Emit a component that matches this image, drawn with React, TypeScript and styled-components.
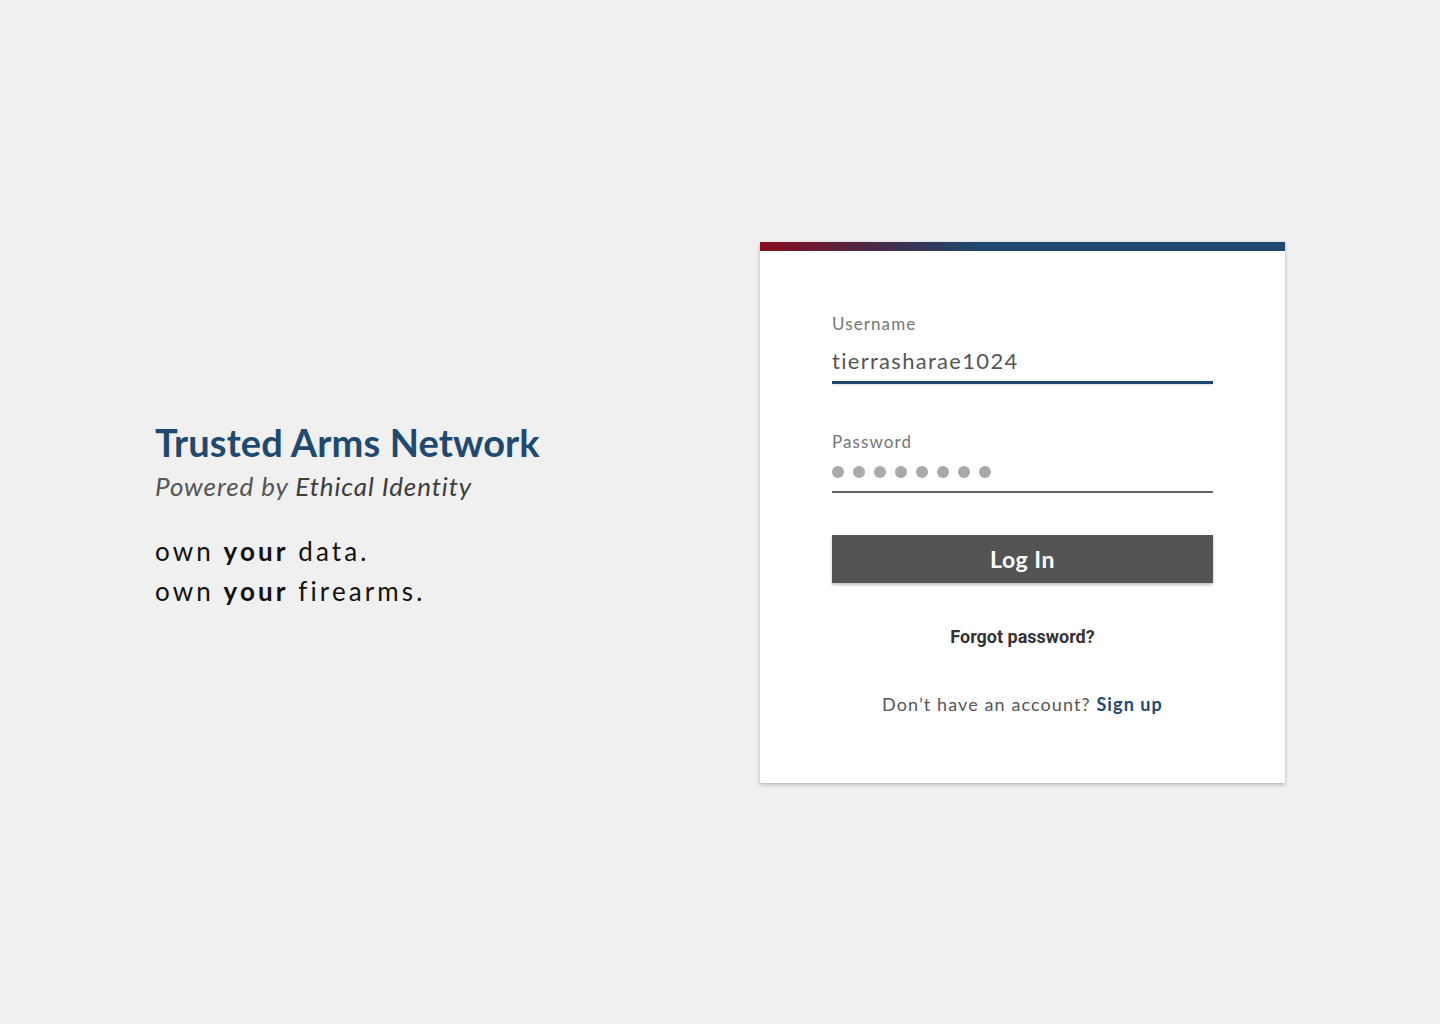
import React from "react";
import styled, { createGlobalStyle } from "styled-components";

const Global = createGlobalStyle`
  html, body { margin: 0; padding: 0; background: #f0f0f0; }
  body { font-family: "Lato", "Noto Sans", sans-serif; }
  * { box-sizing: border-box; }
`;

const Page = styled.main`
  width: 1440px;
  height: 1024px;
  display: flex;
  align-items: center;
  justify-content: space-between;
  padding: 0 155px 0 155px;
`;

const Brand = styled.section`
  display: flex;
  flex-direction: column;
  margin-top: 8px;
`;

const Title = styled.h1`
  margin: 0;
  font-family: "Lato", sans-serif;
  font-weight: 700;
  font-size: 38px;
  line-height: 40px;
  color: #1e4a72;
  letter-spacing: 0.1px;
`;

const Subtitle = styled.p`
  margin: 8px 0 0;
  font-style: italic;
  font-size: 26px;
  line-height: 32px;
  color: #555;
  letter-spacing: 0.9px;
  span { color: #3d3d3d; }
`;

const Tagline = styled.p`
  margin: 29px 0 0;
  font-size: 26px;
  line-height: 40px;
  letter-spacing: 3.1px;
  color: #111;
  b { font-weight: 700; }
`;

const Card = styled.form`
  width: 525px;
  background: #fff;
  border-top: 9px solid transparent;
  border-image: linear-gradient(90deg, #8a0c1e 0%, #4a2a48 22%, #1e4870 42%, #1e4870 100%) 1;
  border-bottom: 0;
  border-left: 0;
  border-right: 0;
  box-shadow: 0 2px 4px rgba(0, 0, 0, 0.22), 0 0 1px rgba(0, 0, 0, 0.15);
  padding: 62px 72px 67px;
  display: flex;
  flex-direction: column;
`;

const Field = styled.div<{ $gap: number }>`
  display: flex;
  flex-direction: column;
  margin-bottom: ${(p) => p.$gap}px;
`;

const Label = styled.label`
  font-size: 17px;
  line-height: 22px;
  color: #767676;
  letter-spacing: 1.1px;
`;

const ValueRow = styled.div<{ $active?: boolean }>`
  height: ${(p) => (p.$active ? 39 : 32)}px;
  display: flex;
  align-items: flex-start;
  margin-top: ${(p) => (p.$active ? 10 : 8)}px;
  border-bottom: ${(p) => (p.$active ? "3px solid #1e4870" : "2px solid #666")};
  box-shadow: ${(p) => (p.$active ? "0 2px 2px -1px rgba(0,0,0,0.15)" : "none")};
`;

const Value = styled.span`
  font-size: 22px;
  letter-spacing: 1.3px;
  color: #555;
  line-height: 28px;
  margin-top: 2px;
`;

const Dots = styled.div`
  display: flex;
  gap: 9px;
  margin-top: 5px;
`;

const Dot = styled.span`
  width: 12px;
  height: 12px;
  border-radius: 50%;
  background: #a9a9a9;
`;

const Button = styled.button`
  height: 48px;
  margin-top: 0;
  border: 0;
  background: #545454;
  color: #fff;
  font-family: "Lato", sans-serif;
  font-weight: 700;
  font-size: 23px;
  letter-spacing: 0.5px;
  box-shadow: 0 2px 3px rgba(0, 0, 0, 0.25);
  cursor: pointer;
`;

const Forgot = styled.a`
  margin-top: 42px;
  align-self: center;
  font-family: "Roboto", sans-serif;
  font-weight: 700;
  font-size: 18px;
  line-height: 24px;
  color: #333;
  text-decoration: none;
`;

const SignUp = styled.p`
  margin: 43px 0 0;
  text-align: center;
  font-size: 18px;
  line-height: 24px;
  color: #555;
  letter-spacing: 1.1px;
  a { color: #1e4870; font-weight: 700; text-decoration: none; }
`;

export default function App() {
  return (
    <>
      <Global />
      <Page>
        <Brand>
          <Title>Trusted Arms Network</Title>
          <Subtitle>
            Powered by <span>Ethical Identity</span>
          </Subtitle>
          <Tagline>
            own <b>your</b> data.
            <br />
            own <b>your</b> firearms.
          </Tagline>
        </Brand>
        <Card onSubmit={(e) => e.preventDefault()}>
          <Field $gap={47}>
            <Label>Username</Label>
            <ValueRow $active>
              <Value>tierrasharae1024</Value>
            </ValueRow>
          </Field>
          <Field $gap={42}>
            <Label>Password</Label>
            <ValueRow>
              <Dots>
                {Array.from({ length: 8 }).map((_, i) => (
                  <Dot key={i} />
                ))}
              </Dots>
            </ValueRow>
          </Field>
          <Button type="submit">Log In</Button>
          <Forgot href="#">Forgot password?</Forgot>
          <SignUp>
            Don’t have an account? <a href="#">Sign up</a>
          </SignUp>
        </Card>
      </Page>
    </>
  );
}
